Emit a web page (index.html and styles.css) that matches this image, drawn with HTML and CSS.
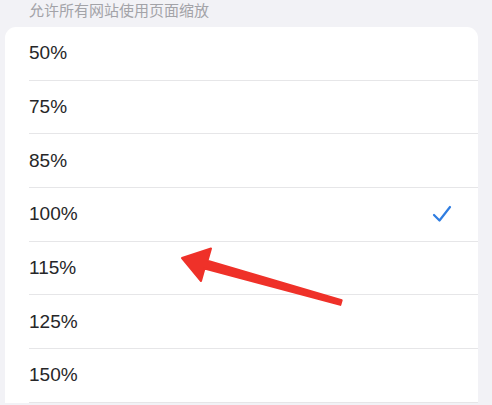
FILE: index.html
```html
<!DOCTYPE html>
<html lang="zh-CN">

<head>
    <meta charset="UTF-8">
    <meta name="viewport" content="width=device-width, initial-scale=1.0">
    <title>页面缩放</title>
    <link rel="stylesheet" href="styles.css">
</head>

<body>
    <p class="titulo">允许所有网站使用页面缩放</p>
    <ul class="lista">
        <li class="fila"><span>50%</span></li>
        <li class="fila"><span>75%</span></li>
        <li class="fila"><span>85%</span></li>
        <li class="fila activa">
            <span>100%</span>
            <svg class="check" width="20" height="18" viewBox="0 0 20 18">
                <path d="M2 10 L7.5 15.5 L18 2" fill="none" stroke="#2f7de1" stroke-width="2.2" stroke-linecap="round" stroke-linejoin="round"/>
            </svg>
        </li>
        <li class="fila"><span>115%</span></li>
        <li class="fila"><span>125%</span></li>
        <li class="fila"><span>150%</span></li>
    </ul>
    <svg class="flecha" width="492" height="405" viewBox="0 0 492 405">
        <polygon points="182,258 211,248.5 207.5,260.8 341.7,300.1 340.3,304.9 204.5,268.5 201,281" fill="#ef3129" stroke="#ef3129" stroke-width="2" stroke-linejoin="round"/>
    </svg>
</body>

</html>
```

FILE: styles.css
```css
body {
    margin: 0;
    background-color: #f2f2f6;
    font-family: "Liberation Sans", "Noto Sans CJK SC", sans-serif;
    height: 405px;
    overflow: hidden;
    position: relative;
}

.titulo {
    margin: 0;
    padding-left: 29px;
    height: 27px;
    line-height: 22px;
    font-size: 15px;
    color: #a3a3a8;
}

.lista {
    list-style: none;
    margin: 0 0 0 5px;
    padding: 0;
    width: 473px;
    background-color: white;
    border-radius: 11px 11px 0 0;
}

.fila {
    margin-left: 24px;
    padding-right: 26px;
    height: 52.7px;
    border-bottom: 1px solid #e6e6e8;
    display: flex;
    align-items: center;
    justify-content: space-between;
    font-size: 19px;
    color: #262628;
}

.check {
    display: block;
}

.flecha {
    position: absolute;
    left: 0;
    top: 0;
}
```
